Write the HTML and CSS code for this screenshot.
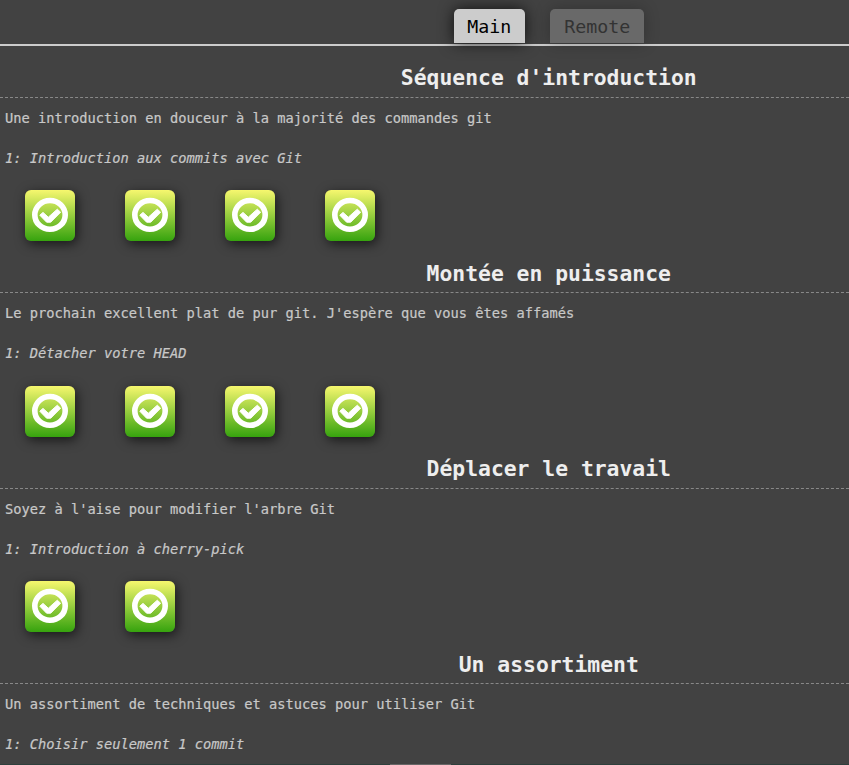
FILE: index.html
```html
<!DOCTYPE html>
<html lang="fr">
<head>
<meta charset="utf-8">
<title>Learn Git Branching</title>
<link rel="stylesheet" href="styles.css">
</head>
<body>
<svg class="defs" width="0" height="0">
  <symbol id="ok" viewBox="0 0 50 51">
    <ellipse cx="25" cy="24.9" rx="15.2" ry="14.4" fill="none" stroke="#fff" stroke-width="5.6"/>
    <path fill="#fff" stroke="#fff" stroke-width="1" stroke-linejoin="round" d="M14.8 25.2 18 22.4 23.3 27.2 32.3 19.2 35.6 22.2 25.7 32.2H21.6Z"/>
  </symbol>
</svg>
<div class="panel">
  <nav class="tabs">
    <div class="tab active">Main</div>
    <div class="tab">Remote</div>
  </nav>
  <section class="series">
    <h2>Séquence d'introduction</h2>
    <p>Une introduction en douceur à la majorité des commandes git</p>
    <p class="level">1: Introduction aux commits avec Git</p>
    <div class="icons">
      <svg class="tile"><use href="#ok"/></svg>
      <svg class="tile"><use href="#ok"/></svg>
      <svg class="tile"><use href="#ok"/></svg>
      <svg class="tile"><use href="#ok"/></svg>
    </div>
  </section>
  <section class="series">
    <h2>Montée en puissance</h2>
    <p>Le prochain excellent plat de pur git. J'espère que vous êtes affamés</p>
    <p class="level">1: Détacher votre HEAD</p>
    <div class="icons">
      <svg class="tile"><use href="#ok"/></svg>
      <svg class="tile"><use href="#ok"/></svg>
      <svg class="tile"><use href="#ok"/></svg>
      <svg class="tile"><use href="#ok"/></svg>
    </div>
  </section>
  <section class="series">
    <h2>Déplacer le travail</h2>
    <p>Soyez à l'aise pour modifier l'arbre Git</p>
    <p class="level">1: Introduction à cherry-pick</p>
    <div class="icons">
      <svg class="tile"><use href="#ok"/></svg>
      <svg class="tile"><use href="#ok"/></svg>
    </div>
  </section>
  <section class="series">
    <h2>Un assortiment</h2>
    <p>Un assortiment de techniques et astuces pour utiliser Git</p>
    <p class="level">1: Choisir seulement 1 commit</p>
  </section>
</div>
<div class="edge"><div class="edge-handle"></div></div>
</body>
</html>
```

FILE: styles.css
```css
body {
  position: relative;
  height: 765px;
  margin: 0;
  overflow: hidden;
  background: #424242;
  color: #c8c8c8;
  font-family: Consolas, "DejaVu Sans Mono", monospace;
  font-size: 13.71px;
}

.defs {
  position: absolute;
}

.tabs {
  display: flex;
  justify-content: center;
  align-items: flex-end;
  gap: 25px;
  height: 43px;
  padding: 0 0 1px 248.5px;
  border-bottom: 2px solid #ccc;
}

.tab {
  box-sizing: border-box;
  height: 34px;
  padding: 0 13.4px 0 14.6px;
  border-radius: 5px 5px 0 0;
  background: #696969;
  color: #333;
  font-size: 18.27px;
  line-height: 35px;
  box-shadow: 0 0 15px rgba(0, 0, 0, .25);
}

.tab.active {
  padding: 0 13.5px;
  background: #ccc;
  color: #000;
  box-shadow: 0 0 15px rgba(0, 0, 0, .75);
}

.series {
  height: 195.4px;
}

.series:last-child {
  height: auto;
}

.series h2 {
  box-sizing: border-box;
  height: 52px;
  margin: 0 0 10px;
  padding: .35px 0 0 248.5px;
  border-bottom: 1px dashed #888;
  color: #eee;
  font-size: 21.36px;
  line-height: 63px;
  text-align: center;
}

.series p {
  margin: 0 0 20px;
  padding-left: 5px;
  line-height: 20px;
  -webkit-text-stroke: .2px;
}

.series .level {
  margin-bottom: 0;
  font-style: italic;
}

.icons {
  display: flex;
  gap: 50px;
  padding: 22.2px 25px 0;
}

.tile {
  width: 50px;
  height: 51px;
  border-radius: 6px;
  background: linear-gradient(#f6f76e, #36a30e);
  box-shadow: 2px 3px 12px rgba(0, 0, 0, .65);
}

.edge {
  position: absolute;
  left: 0;
  right: 0;
  bottom: 0;
  height: 1px;
  background: #2f3f3c;
}

.edge-handle {
  width: 61px;
  height: 1px;
  margin-left: 390px;
  background: #666;
}
```
